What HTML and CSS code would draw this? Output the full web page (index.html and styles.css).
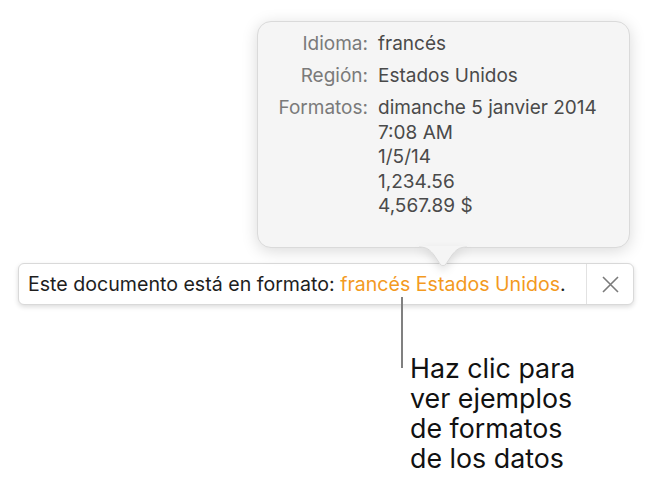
FILE: index.html
```html
<!DOCTYPE html>
<html lang="es">
<head>
<meta charset="utf-8">
<title>Formato de idioma</title>
<link rel="stylesheet" href="styles.css">
</head>
<body>
<div class="stage">
  <div class="popover">
    <div class="row">
      <div class="label">Idioma:</div>
      <div class="value">francés</div>
    </div>
    <div class="row">
      <div class="label">Región:</div>
      <div class="value">Estados Unidos</div>
    </div>
    <div class="row">
      <div class="label">Formatos:</div>
      <div class="value">dimanche 5 janvier 2014<br>7:08 AM<br>1/5/14<br>1,234.56<br>4,567.89 $</div>
    </div>
    <svg class="arrow" width="48" height="21" viewBox="0 0 48 21">
      <path d="M0 1 C8 1 11 4 15 9 L21 18 Q24 21.5 27 18 L33 9 C37 4 40 1 48 1 L48 0 L0 0 Z" fill="#f5f5f5"/>
      <path d="M0 1 C8 1 11 4 15 9 L21 18 Q24 21.5 27 18 L33 9 C37 4 40 1 48 1" fill="none" stroke="#d9d9d9" stroke-width="1"/>
    </svg>
  </div>
  <div class="bar">
    <div class="message">Este documento está en formato: <span class="link">francés Estados Unidos</span>.</div>
    <div class="close">
      <svg width="17" height="17" viewBox="0 0 17 17"><path d="M1 1 L16 16 M16 1 L1 16" stroke="#7b7b7b" stroke-width="1.6" fill="none"/></svg>
    </div>
  </div>
  <div class="callout">
    <div class="pointer"></div>
    <div class="caption">Haz clic para<br>ver ejemplos<br>de formatos<br>de los datos</div>
  </div>
</div>
</body>
</html>
```
FILE: styles.css
```css
html, body {
  margin: 0;
  padding: 0;
  background: #ffffff;
}
body {
  font-family: Inter, Roboto, "Liberation Sans", sans-serif;
  width: 657px;
  height: 499px;
  overflow: hidden;
}
.stage {
  padding-top: 21px;
}
.popover {
  position: relative;
  margin-left: 257px;
  width: 373px;
  height: 227px;
  box-sizing: border-box;
  background: #f5f5f5;
  border: 1px solid #dadada;
  border-radius: 14px;
  box-shadow: 0 3px 16px rgba(0, 0, 0, 0.15);
  padding-top: 10px;
  font-size: 19px;
}
.arrow {
  position: absolute;
  left: 161px;
  top: 224px;
  filter: drop-shadow(0 4px 4px rgba(0, 0, 0, 0.12));
}
.row {
  display: grid;
  grid-template-columns: 110px auto;
  column-gap: 10px;
  margin-bottom: 7.5px;
  line-height: 24.5px;
}
.label {
  text-align: right;
  color: #7a7a7a;
}
.value {
  color: #4a4a4a;
}
.bar {
  margin: 15px 0 0 18px;
  width: 616px;
  height: 42px;
  box-sizing: border-box;
  display: flex;
  align-items: stretch;
  background: #ffffff;
  border: 1px solid #d9d9d9;
  border-radius: 6px;
  box-shadow: 0 2px 5px rgba(0, 0, 0, 0.14);
  font-size: 19.6px;
  color: #1e1e1e;
}
.message {
  flex: 1;
  display: flex;
  align-items: center;
  padding-left: 9px;
  white-space: pre;
}
.link {
  color: #f39a1f;
}
.close {
  width: 46px;
  border-left: 1px solid #e2e2e2;
  display: flex;
  align-items: center;
  justify-content: center;
}
.callout {
  display: flex;
  margin-left: 401px;
  margin-top: -8px;
}
.pointer {
  width: 2px;
  height: 71px;
  background: #808080;
}
.caption {
  margin-left: 7px;
  margin-top: 56px;
  font-size: 26.8px;
  line-height: 30px;
  color: #111111;
}
```
